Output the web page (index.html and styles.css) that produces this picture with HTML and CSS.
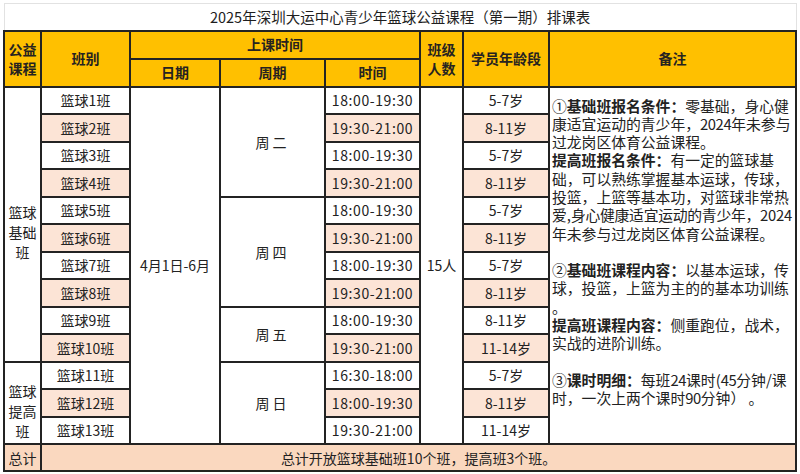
FILE: index.html
```html
<!DOCTYPE html>
<html lang="zh-CN">
<head>
<meta charset="utf-8">
<title>排课表</title>
<link rel="stylesheet" href="styles.css">
</head>
<body>
<div class="page">
<table class="sheet">
  <colgroup>
    <col class="c-course">
    <col class="c-class">
    <col class="c-date">
    <col class="c-week">
    <col class="c-time">
    <col class="c-num">
    <col class="c-age">
    <col class="c-note">
  </colgroup>
  <tr class="r-title"><td colspan="8" class="title">2025年深圳大运中心青少年篮球公益课程（第一期）排课表</td></tr>
  <tr class="r-head">
    <th rowspan="2">公益课程</th>
    <th rowspan="2">班别</th>
    <th colspan="3">上课时间</th>
    <th rowspan="2">班级人数</th>
    <th rowspan="2">学员年龄段</th>
    <th rowspan="2">备注</th>
  </tr>
  <tr class="r-head">
    <th>日期</th>
    <th>周期</th>
    <th>时间</th>
  </tr>
  <tr class="r-data">
    <td rowspan="10" class="group">篮球基础班</td>
    <td>篮球1班</td>
    <td rowspan="13">4月1日-6月</td>
    <td rowspan="4" class="week">周二</td>
    <td class="time">18:00-19:30</td>
    <td rowspan="13">15人</td>
    <td>5-7岁</td>
    <td rowspan="13" class="note">①<b>基础班报名条件：</b>零基础，身心健<br>康适宜运动的青少年，<span class="tight">2024</span>年未参与<br>过龙岗区体育公益课程。<br><b>提高班报名条件：</b>有一定的篮球基<br>础，可以熟练掌握基本运球，传球，<br>投篮，上篮等基本功，对篮球非常热<br>爱,<span class="tight2">身心健康适宜运动的青少年，2024</span><br>年未参与过龙岗区体育公益课程。<br>&nbsp;<br>②<b>基础班课程内容：</b>以基本运球，传<br>球，投篮，上篮为主的的基本功训练<br>。<br><b>提高班课程内容：</b>侧重跑位，战术，<br>实战的进阶训练。<br>&nbsp;<br>③<b>课时明细：</b>每班<span class="tight">24</span>课时(<span class="tight">45</span>分钟/课<br>时，一次上两个课时<span class="tight">90</span>分钟） 。</td>
  </tr>
  <tr class="r-data alt">
    <td>篮球2班</td>
    <td class="time">19:30-21:00</td>
    <td>8-11岁</td>
  </tr>
  <tr class="r-data">
    <td>篮球3班</td>
    <td class="time">18:00-19:30</td>
    <td>5-7岁</td>
  </tr>
  <tr class="r-data alt">
    <td>篮球4班</td>
    <td class="time">19:30-21:00</td>
    <td>8-11岁</td>
  </tr>
  <tr class="r-data">
    <td>篮球5班</td>
    <td rowspan="4" class="week">周四</td>
    <td class="time">18:00-19:30</td>
    <td>5-7岁</td>
  </tr>
  <tr class="r-data alt">
    <td>篮球6班</td>
    <td class="time">19:30-21:00</td>
    <td>8-11岁</td>
  </tr>
  <tr class="r-data">
    <td>篮球7班</td>
    <td class="time">18:00-19:30</td>
    <td>5-7岁</td>
  </tr>
  <tr class="r-data alt">
    <td>篮球8班</td>
    <td class="time">19:30-21:00</td>
    <td>8-11岁</td>
  </tr>
  <tr class="r-data">
    <td>篮球9班</td>
    <td rowspan="2" class="week">周五</td>
    <td class="time">18:00-19:30</td>
    <td>8-11岁</td>
  </tr>
  <tr class="r-data alt">
    <td>篮球10班</td>
    <td class="time">19:30-21:00</td>
    <td>11-14岁</td>
  </tr>
  <tr class="r-data">
    <td rowspan="3" class="group">篮球提高班</td>
    <td>篮球11班</td>
    <td rowspan="3" class="week">周日</td>
    <td class="time">16:30-18:00</td>
    <td>5-7岁</td>
  </tr>
  <tr class="r-data alt">
    <td>篮球12班</td>
    <td class="time">18:00-19:30</td>
    <td>8-11岁</td>
  </tr>
  <tr class="r-data">
    <td>篮球13班</td>
    <td class="time">19:30-21:00</td>
    <td>11-14岁</td>
  </tr>
  <tr class="r-total">
    <td>总计</td>
    <td colspan="7">总计开放篮球基础班10个班，提高班3个班。</td>
  </tr>
</table>
</div>
</body>
</html>
```
FILE: styles.css
```css
html, body {
  margin: 0;
  padding: 0;
  background: #ffffff;
}

.page {
  padding: 3px 0 0 3px;
}

.sheet {
  border-collapse: collapse;
  table-layout: fixed;
  width: 794px;
  font-family: "Noto Sans CJK SC", "Noto Sans", sans-serif;
  font-size: 14px;
  color: #222222;
}

.c-course { width: 37px; }
.c-class { width: 89px; }
.c-date { width: 90px; }
.c-week { width: 105px; }
.c-time { width: 95px; }
.c-num { width: 43px; }
.c-age { width: 86px; }
.c-note { width: 247px; }

.sheet td,
.sheet th {
  border: 2px solid #232323;
  padding: 0 2px;
  text-align: center;
  vertical-align: middle;
  line-height: 20px;
  overflow: hidden;
}

.r-title { height: 27px; }
.r-title .title {
  border: 1px solid #e2e2e2;
  border-bottom: 2px solid #232323;
  font-size: 14.5px;
  color: #1e1e1e;
  background: #ffffff;
}

.r-head { height: 28px; }
.r-head th {
  background: #ffc000;
  font-weight: 700;
  color: #262320;
  line-height: 19px;
}

.r-data { height: 27.5px; }

.r-data.alt td {
  background: #fce4d6;
}

.group {
  line-height: 21px;
  padding-top: 16px !important;
}

.week {
  letter-spacing: 3px;
}

.time {
  letter-spacing: 0.6px;
}

.note {
  text-align: left !important;
  vertical-align: top !important;
  white-space: nowrap;
  font-size: 14.8px;
  line-height: 18.3px !important;
  padding: 9px 0 0 2px !important;
  background: #ffffff !important;
}

.note b {
  font-weight: 700;
}

.tight {
  letter-spacing: -0.4px;
}

.tight2 {
  letter-spacing: -0.25px;
}

.r-total { height: 27px; }
.r-total td {
  background: #fad8bf;
}
```
